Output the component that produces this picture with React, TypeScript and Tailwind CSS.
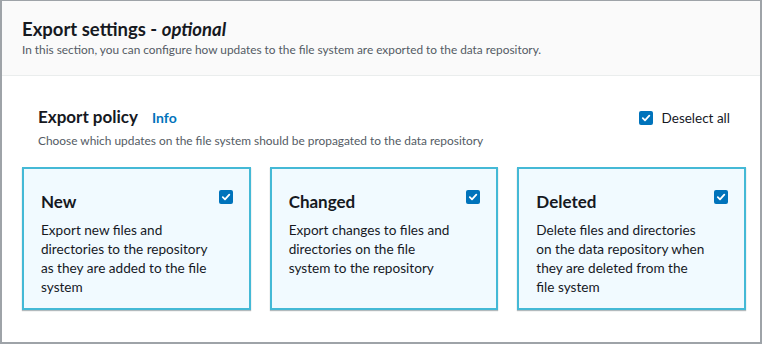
import { useState } from 'react';

const font = { fontFamily: 'Lato, "Open Sans", sans-serif' };

const CheckBox = ({ checked, onClick }: { checked: boolean; onClick?: () => void }) => (
  <button
    type="button"
    onClick={onClick}
    className={`flex h-[14px] w-[14px] shrink-0 items-center justify-center rounded-[2px] ${
      checked ? 'bg-[#0073bb]' : 'border-2 border-[#aab7b8] bg-white'
    }`}
  >
    {checked && (
      <svg width="10" height="10" viewBox="0 0 10 10" fill="none">
        <path d="M1.8 5.2 L4 7.3 L8.3 2.6" stroke="white" strokeWidth="1.8" strokeLinecap="round" strokeLinejoin="round" />
      </svg>
    )}
  </button>
);

const options = [
  {
    id: 'new',
    title: 'New',
    text: 'Export new files and directories to the repository as they are added to the file system',
  },
  {
    id: 'changed',
    title: 'Changed',
    text: 'Export changes to files and directories on the file system to the repository',
  },
  {
    id: 'deleted',
    title: 'Deleted',
    text: 'Delete files and directories on the data repository when they are deleted from the file system',
  },
];

const App = () => {
  const [selected, setSelected] = useState(['new', 'changed', 'deleted']);

  const toggle = (id: string) => {
    setSelected(prev => (prev.includes(id) ? prev.filter(s => s !== id) : [...prev, id]));
  };

  return (
    <div className="h-[344px] w-[762px] overflow-hidden bg-white" style={font}>
      <div className="flex h-full flex-col border-2 border-t-[1px] border-[#9ea3a8]">
        {/* header */}
        <div className="h-[75px] border-b border-[#eaeded] bg-[#fafafa] px-5 pt-[16px]">
          <h2 className="text-[18.5px] font-bold leading-[24px] text-[#16191f]">
            Export settings - <i>optional</i>
          </h2>
          <p className="mt-[1px] text-[11.85px] leading-[16px] text-[#545b64]">
            In this section, you can configure how updates to the file system are exported to the data repository.
          </p>
        </div>

        {/* body */}
        <div className="flex-1 pl-5 pr-[14px] pt-[31px]">
          <div className="flex items-start justify-between pl-4 pr-[16px]">
            <div>
              <div className="flex items-baseline gap-[14px]">
                <span className="text-[17px] font-bold leading-[20px] text-[#16191f]">Export policy</span>
                <span className="text-[14px] font-bold text-[#0073bb]">Info</span>
              </div>
              <p className="mt-[5px] text-[11.9px] leading-[16px] text-[#545b64]">
                Choose which updates on the file system should be propagated to the data repository
              </p>
            </div>
            <div className="flex items-center gap-[9px] pt-[1px]">
              <CheckBox
                checked={selected.length === 3}
                onClick={() => setSelected(selected.length === 3 ? [] : options.map(o => o.id))}
              />
              <span className="text-[13.5px] leading-[20px] text-[#16191f]">Deselect all</span>
            </div>
          </div>

          <div className="mt-[18px] grid grid-cols-3 gap-[19px]">
            {options.map(opt => {
              const on = selected.includes(opt.id);
              return (
                <div
                  key={opt.id}
                  onClick={() => toggle(opt.id)}
                  className={`flex h-[143px] cursor-pointer justify-between border-2 pl-[17px] pr-[16px] pt-[22px] shadow-[0_1px_1px_rgba(0,28,36,0.3)] ${
                    on ? 'border-[#44b9d6] bg-[#f1faff]' : 'border-[#eaeded] bg-white'
                  }`}
                >
                  <div className="w-[170px]">
                    <div className="text-[17px] font-bold leading-[22px] text-[#16191f]">{opt.title}</div>
                    <p className="mt-[8px] text-[13.6px] leading-[19px] text-[#16191f]">{opt.text}</p>
                  </div>
                  <div className="-mt-[1px]">
                    <CheckBox checked={on} />
                  </div>
                </div>
              );
            })}
          </div>
        </div>
      </div>
    </div>
  );
};

export default App;
